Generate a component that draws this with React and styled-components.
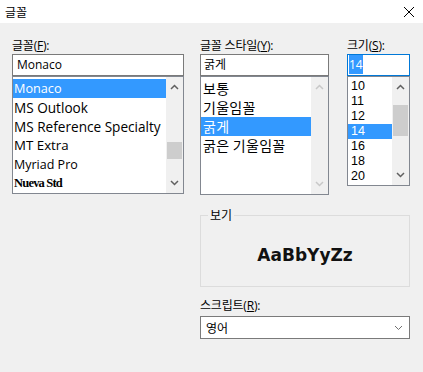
import React from "react";
import styled, { createGlobalStyle } from "styled-components";

const Global = createGlobalStyle`
  html, body { margin: 0; padding: 0; background: #f0f0f0; }
  body { font-family: "Open Sans", "Noto Sans CJK KR", sans-serif; font-size: 12px; color: #000; }
  * { box-sizing: border-box; }
`;

const Window = styled.div`
  width: 423px;
  height: 372px;
  display: flex;
  flex-direction: column;
  background: #f0f0f0;
  overflow: hidden;
`;

const TitleBar = styled.div`
  height: 23px;
  flex-shrink: 0;
  background: #fff;
  display: flex;
  align-items: center;
  justify-content: space-between;
  padding: 0 9px 0 5px;
`;

const Title = styled.span`
  font-size: 12px;
  line-height: 16px;
  font-family: "Noto Sans CJK KR", sans-serif;
`;

const CloseIcon = styled.svg`
  display: block;
`;

const Body = styled.div`
  display: grid;
  grid-template-columns: 172px 131px 63px;
  column-gap: 16px;
  padding: 15px 0 0 12px;
  align-items: start;
`;

const Column = styled.div`
  display: flex;
  flex-direction: column;
  width: ${(p) => p.$width}px;
`;

const Label = styled.div`
  height: 16px;
  line-height: 16px;
  font-size: 12px;
  white-space: nowrap;
  letter-spacing: -0.2px;
`;

const TextBox = styled.div`
  height: 22px;
  border: 1px solid ${(p) => (p.$focused ? "#0078d7" : "#7a7a7a")};
  background: #fff;
  padding: 0 ${(p) => p.$pad}px;
  line-height: 20px;
  font-size: 12px;
  white-space: nowrap;
  overflow: hidden;
`;

const Selection = styled.span`
  background: #3399ff;
  color: #fff;
  padding: 1px 0;
`;

const ListBox = styled.div`
  height: ${(p) => p.$height}px;
  border: 1px solid #828790;
  background: #fff;
  display: flex;
`;

const Items = styled.div`
  flex: 1;
  min-width: 0;
  padding-top: 2px;
  overflow: hidden;
`;

const Item = styled.div`
  height: ${(p) => p.$h}px;
  line-height: ${(p) => p.$h}px;
  padding-left: ${(p) => p.$indent}px;
  white-space: nowrap;
  overflow: hidden;
  font-family: ${(p) => p.$family || "inherit"};
  font-size: ${(p) => p.$size}px;
  font-weight: ${(p) => p.$weight || 400};
  letter-spacing: ${(p) => p.$ls || 0}px;
  background: ${(p) => (p.$selected ? "#3399ff" : "transparent")};
  color: ${(p) => (p.$selected ? "#fff" : "#000")};
`;

const ScrollBar = styled.div`
  width: 17px;
  flex-shrink: 0;
  background: #f0f0f0;
  display: flex;
  flex-direction: column;
`;

const Arrow = styled.div`
  height: 20px;
  flex-shrink: 0;
  display: flex;
  align-items: center;
  justify-content: center;
  color: ${(p) => (p.$disabled ? "#c8c8c8" : "#606060")};
`;

const Track = styled.div`
  flex: 1;
`;

const Thumb = styled.div`
  margin: ${(p) => p.$top}px 1px 0;
  height: ${(p) => p.$len}px;
  background: #cdcdcd;
`;

const Group = styled.fieldset`
  grid-column: 2 / 4;
  margin: 12px 0 0;
  padding: 0;
  min-width: 0;
  height: 80px;
  border: 1px solid #dcdcdc;
`;

const Legend = styled.legend`
  margin-left: 7px;
  padding: 0 2px;
  font-size: 12px;
  line-height: 16px;
  font-family: "Noto Sans CJK KR", sans-serif;
`;

const Sample = styled.div`
  text-align: center;
  padding-top: 22px;
  line-height: 20px;
  font-family: "DejaVu Sans", sans-serif;
  font-weight: 700;
  font-size: 17px;
  color: #111;
`;

const ScriptBlock = styled.div`
  grid-column: 2 / 4;
  margin-top: 11px;
  display: flex;
  flex-direction: column;
`;

const Dropdown = styled.div`
  margin-top: 2px;
  height: 23px;
  border: 1px solid #7a7a7a;
  background: #fff;
  display: flex;
  align-items: center;
  justify-content: space-between;
  padding: 0 6px 0 5px;
  font-size: 12px;
  font-family: "Noto Sans CJK KR", sans-serif;
`;

const Chevron = ({ up, color = "currentColor", w = 9, h = 6, sw = 1.5 }) => (
  <svg width={w} height={h} viewBox="0 0 9 6" style={{ display: "block" }}>
    <polyline
      points={up ? "1,5 4.5,1.5 8,5" : "1,1 4.5,4.5 8,1"}
      fill="none"
      stroke={color}
      strokeWidth={sw}
    />
  </svg>
);

const Scroll = ({ thumbTop, thumbLen, disabled }) => (
  <ScrollBar>
    <Arrow $disabled={disabled}>
      <Chevron up />
    </Arrow>
    <Track>{!disabled && <Thumb $top={thumbTop} $len={thumbLen} />}</Track>
    <Arrow $disabled={disabled}>
      <Chevron />
    </Arrow>
  </ScrollBar>
);

const fonts = [
  { t: "Monaco", size: 12.7, sel: true },
  { t: "MS Outlook", size: 13.6 },
  { t: "MS Reference Specialty", size: 13.6 },
  { t: "MT Extra", size: 13.3 },
  { t: "Myriad Pro", size: 12.5 },
  { t: "Nueva Std", size: 12.5, family: '"Liberation Serif", serif', weight: 700, ls: -0.8 },
];

const styles = [
  { t: "보통" },
  { t: "기울임꼴" },
  { t: "굵게", sel: true },
  { t: "굵은 기울임꼴" },
];

const sizes = ["10", "11", "12", "14", "16", "18", "20"];

const U = styled.u`
  text-underline-offset: 1px;
`;

export default function App() {
  return (
    <>
      <Global />
      <Window>
        <TitleBar>
          <Title>글꼴</Title>
          <CloseIcon width="10" height="10" viewBox="0 0 10 10">
            <line x1="0" y1="0" x2="10" y2="10" stroke="#000" strokeWidth="1" />
            <line x1="10" y1="0" x2="0" y2="10" stroke="#000" strokeWidth="1" />
          </CloseIcon>
        </TitleBar>
        <Body>
          <Column $width={172}>
            <Label>
              글꼴(<U>F</U>):
            </Label>
            <TextBox $pad={4}>Monaco</TextBox>
            <ListBox $height={118}>
              <Items>
                {fonts.map((f) => (
                  <Item
                    key={f.t}
                    $h={19}
                    $indent={1}
                    $size={f.size}
                    $family={f.family}
                    $weight={f.weight}
                    $ls={f.ls}
                    $selected={f.sel}
                  >
                    {f.t}
                  </Item>
                ))}
              </Items>
              <Scroll thumbTop={45} thumbLen={17} />
            </ListBox>
          </Column>
          <Column $width={129}>
            <Label>
              글꼴 스타일(<U>Y</U>):
            </Label>
            <TextBox $pad={3}>굵게</TextBox>
            <ListBox $height={119}>
              <Items>
                {styles.map((s) => (
                  <Item
                    key={s.t}
                    $h={19}
                    $indent={2}
                    $size={14}
                    $ls={0.3}
                    $family='"Noto Sans CJK KR", sans-serif'
                    $selected={s.sel}
                  >
                    {s.t}
                  </Item>
                ))}
              </Items>
              <Scroll disabled />
            </ListBox>
          </Column>
          <Column $width={63}>
            <Label>
              크기(<U>S</U>):
            </Label>
            <TextBox $pad={1} $focused>
              <Selection>14</Selection>
            </TextBox>
            <ListBox $height={110}>
              <Items>
                {sizes.map((s) => (
                  <Item
                    key={s}
                    $h={15}
                    $indent={3}
                    $size={12.5}
                    $family='"Liberation Sans", sans-serif'
                    $selected={s === "14"}
                  >
                    {s}
                  </Item>
                ))}
              </Items>
              <Scroll thumbTop={8} thumbLen={31} />
            </ListBox>
          </Column>
          <Group>
            <Legend>보기</Legend>
            <Sample>AaBbYyZz</Sample>
          </Group>
          <ScriptBlock>
            <Label>
              스크립트(<U>R</U>):
            </Label>
            <Dropdown>
              <span>영어</span>
              <Chevron color="#707070" sw={1} />
            </Dropdown>
          </ScriptBlock>
        </Body>
      </Window>
    </>
  );
}
